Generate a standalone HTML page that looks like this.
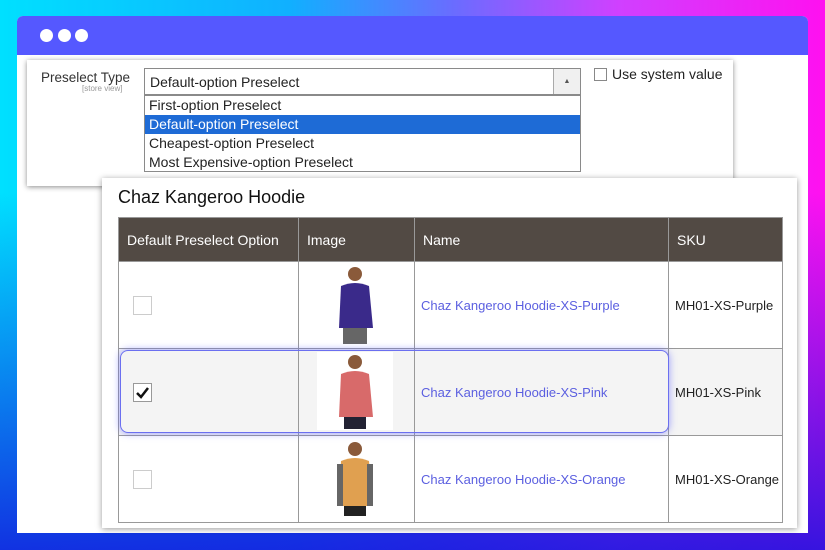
<!DOCTYPE html>
<html><head><style>
*{margin:0;padding:0;box-sizing:border-box}
body{width:825px;height:550px;overflow:hidden;font-family:"Liberation Sans",sans-serif;position:relative;background:#2020e0}
.bg1{position:absolute;inset:0;background:linear-gradient(90deg,#00e0ff 0%,#10b0ff 35%,#6a6cff 55%,#d040ff 75%,#ff10f0 100%)}
.bg2{position:absolute;inset:0;background:linear-gradient(180deg,rgba(20,20,230,0) 0%,rgba(20,20,230,0) 35%,rgba(20,20,220,.85) 100%)}
.win{position:absolute;left:17px;top:16px;width:791px;height:517px;background:#fff;border-radius:6px 6px 0 0;overflow:hidden}
.hd{height:39px;background:#5558ff;position:relative}
.dot{position:absolute;top:13px;width:13px;height:13px;border-radius:50%;background:#fff}
.p1{position:absolute;left:27px;top:60px;width:706px;height:126px;background:#fff;box-shadow:0 1px 5px rgba(0,0,0,.45)}
.lbl{position:absolute;left:14px;top:10px;font-size:13.5px;color:#333}
.sv{position:absolute;left:55px;top:24px;font-size:8px;color:#999}
.sel{position:absolute;left:117px;top:8px;width:437px;height:27px;border:1px solid #8a8a8a;font-size:14px;padding:5px 5px;color:#222}
.arr{position:absolute;right:0;top:0;width:27px;height:25px;border-left:1px solid #aaa;background:#f0f0f0;font-size:7px;text-align:center;line-height:25px;color:#555}
.list{position:absolute;left:117px;top:35px;width:437px;height:77px;border:1px solid #8a8a8a;font-size:14px;color:#222}
.list div{height:19px;line-height:19px;padding-left:4px}
.list .on{background:#1e6bd6;color:#fff}
.cb{position:absolute;left:567px;top:8px;width:13px;height:13px;border:1px solid #888}
.usv{position:absolute;left:585px;top:6px;font-size:14px;color:#222}
.p2{position:absolute;left:102px;top:178px;width:695px;height:350px;background:#fff;box-shadow:0 1px 6px rgba(0,0,0,.4)}
.ttl{position:absolute;left:16px;top:9px;font-size:18px;color:#111}
table{position:absolute;left:16px;top:39px;width:665px;border-collapse:collapse;font-size:13px;table-layout:fixed}
td,th{border:1px solid #999;text-align:left;font-weight:normal;white-space:nowrap;overflow:hidden}
th{background:#524a44;color:#fff;height:44px;padding-left:8px;font-size:14px}
td{height:86px;padding:0 0 0 6px;color:#222}
tr.g td{background:#f4f4f4}
a{color:#5b5fe0;text-decoration:none}
.c{width:19px;height:19px;border:1px solid #ccc;background:#fff;margin-left:8px;position:relative}
.hl{position:absolute;left:120px;top:350px;width:549px;height:83px;border:1.5px solid #6b6ff0;border-radius:8px;box-shadow:0 0 8px rgba(90,95,255,.6)}
svg{display:block}
</style></head><body>
<div class="bg1"></div><div class="bg2"></div>
<div class="win"><div class="hd"><div class="dot" style="left:23px"></div><div class="dot" style="left:41px"></div><div class="dot" style="left:58px"></div></div></div>
<div class="p1">
<div class="lbl">Preselect Type</div><div class="sv">[store view]</div>
<div class="sel">Default-option Preselect<div class="arr">▲</div></div>
<div class="list"><div>First-option Preselect</div><div class="on">Default-option Preselect</div><div>Cheapest-option Preselect</div><div>Most Expensive-option Preselect</div></div>
<div class="cb"></div><div class="usv">Use system value</div>
</div>
<div class="p2">
<div class="ttl">Chaz Kangeroo Hoodie</div>
<table>
<tr><th style="width:180px">Default Preselect Option</th><th style="width:116px">Image</th><th style="width:254px">Name</th><th>SKU</th></tr>
<tr><td><div class="c"></div></td><td style="padding:0"><svg width="116" height="86"><rect x="30" y="2" width="52" height="82" fill="#fff"/><circle cx="56" cy="12" r="7" fill="#8a5a3a"/><path d="M42 24 Q56 18 70 24 L74 66 L40 66 Z" fill="#3a2a8a"/><rect x="44" y="66" width="24" height="16" fill="#666"/></svg></td><td><a>Chaz Kangeroo Hoodie-XS-Purple</a></td><td>MH01-XS-Purple</td></tr>
<tr class="g"><td><div class="c" style="border-color:#999"><svg width="17" height="17" style="position:absolute;left:0;top:0"><path d="M3 9 L7 13 L14 4" stroke="#111" stroke-width="2.5" fill="none"/></svg></div></td><td style="padding:0"><svg width="116" height="86"><rect x="18" y="3" width="76" height="78" fill="#fff"/><circle cx="56" cy="13" r="7" fill="#8a5a3a"/><path d="M42 25 Q56 19 70 25 L74 68 L40 68 Z" fill="#d86a6a"/><rect x="45" y="68" width="22" height="12" fill="#223"/></svg></td><td><a>Chaz Kangeroo Hoodie-XS-Pink</a></td><td>MH01-XS-Pink</td></tr>
<tr><td><div class="c"></div></td><td style="padding:0"><svg width="116" height="86"><rect x="30" y="3" width="36" height="80" fill="#fff"/><circle cx="56" cy="13" r="7" fill="#8a5a3a"/><path d="M42 25 Q56 19 70 25 L74 70 L40 70 Z" fill="#e0a050"/><rect x="38" y="28" width="6" height="42" fill="#666"/><rect x="68" y="28" width="6" height="42" fill="#666"/><rect x="45" y="70" width="22" height="10" fill="#222"/></svg></td><td><a>Chaz Kangeroo Hoodie-XS-Orange</a></td><td>MH01-XS-Orange</td></tr>
</table>
</div>
<div class="hl"></div>
</body></html>
